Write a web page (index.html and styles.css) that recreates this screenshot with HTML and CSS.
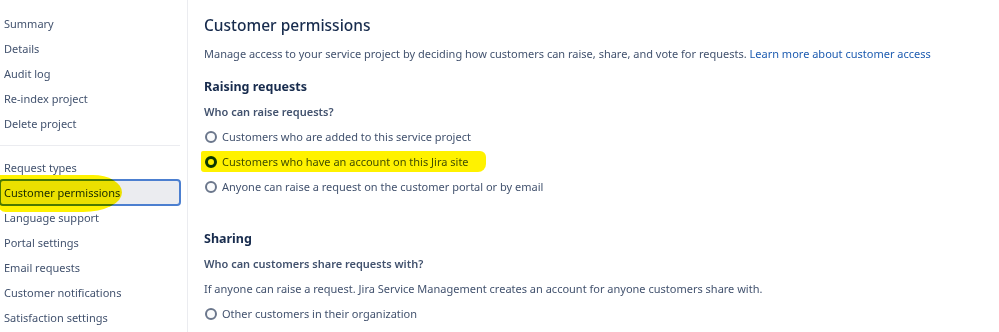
FILE: index.html
```html
<!DOCTYPE html>
<html>
<head>
<meta charset="utf-8">
<link rel="stylesheet" href="styles.css">
</head>
<body>
<div class="page">
  <nav class="sidebar">
    <div class="group">
      <div class="item">Summary</div>
      <div class="item">Details</div>
      <div class="item">Audit log</div>
      <div class="item">Re-index project</div>
      <div class="item">Delete project</div>
    </div>
    <div class="divider"></div>
    <div class="group">
      <div class="item">Request types</div>
      <div class="item selected">Customer permissions<span class="marker marker-side"></span></div>
      <div class="item">Language support</div>
      <div class="item">Portal settings</div>
      <div class="item">Email requests</div>
      <div class="item">Customer notifications</div>
      <div class="item">Satisfaction settings</div>
    </div>
  </nav>
  <main class="content">
    <h1 class="title">Customer permissions</h1>
    <p class="desc">Manage access to your service project by deciding how customers can raise, share, and vote for requests. <a class="link">Learn more about customer access</a></p>
    <h2 class="section">Raising requests</h2>
    <div class="label">Who can raise requests?</div>
    <label class="radio"><span class="dot"></span>Customers who are added to this service project</label>
    <label class="radio checked"><span class="dot"></span>Customers who have an account on this Jira site<span class="marker marker-main"></span></label>
    <label class="radio"><span class="dot"></span>Anyone can raise a request on the customer portal or by email</label>
    <h2 class="section sharing">Sharing</h2>
    <div class="label">Who can customers share requests with?</div>
    <p class="desc">If anyone can raise a request. Jira Service Management creates an account for anyone customers share with.</p>
    <label class="radio"><span class="dot"></span>Other customers in their organization</label>
  </main>
</div>
</body>
</html>
```

FILE: styles.css
```css
html, body {
  margin: 0;
  padding: 0;
  background: #ffffff;
}
body {
  font-family: "Noto Sans", "Open Sans", sans-serif;
  color: #172b4d;
  overflow: hidden;
}
.page {
  display: flex;
  height: 332px;
}
.sidebar {
  width: 188px;
  flex: none;
  border-right: 1px solid #ebecf0;
  padding-top: 11px;
  box-sizing: border-box;
}
.group {
  width: 180px;
}
.item {
  position: relative;
  height: 25px;
  line-height: 25px;
  padding-left: 4px;
  font-size: 11px;
  color: #42526e;
  white-space: nowrap;
}
.item.selected {
  background: #ebecf0;
  outline: 2px solid #4c7fd0;
  outline-offset: -1px;
  border-radius: 3px;
  color: #172b4d;
}
.divider {
  width: 180px;
  height: 1px;
  background: #ebecf0;
  margin: 9px 0 9px;
}
.marker {
  position: absolute;
  background: #fff200;
  mix-blend-mode: multiply;
  pointer-events: none;
}
.marker-side {
  left: -4px;
  top: -5px;
  width: 126px;
  height: 37px;
  border-radius: 4px 30px 40px 10px / 4px 18px 20px 14px;
}
.marker-main {
  left: -3px;
  top: 2px;
  width: 285px;
  height: 21px;
  border-radius: 2px 6px 8px 3px;
}
.content {
  flex: 1;
  padding: 11px 0 0 16px;
}
.title {
  margin: 0;
  font-size: 15.5px;
  font-weight: 500;
  line-height: 28px;
  color: #172b4d;
}
.desc {
  margin: 2px 0 0;
  height: 25px;
  line-height: 25px;
  font-size: 11px;
  color: #42526e;
  white-space: nowrap;
}
.link {
  color: #1c5bb0;
}
.section {
  margin: 8px 0 0;
  height: 25px;
  line-height: 25px;
  font-size: 12.5px;
  font-weight: 700;
  color: #172b4d;
}
.section.sharing {
  margin-top: 27px;
}
.label {
  height: 25px;
  line-height: 25px;
  font-size: 11px;
  font-weight: 600;
  color: #42526e;
}
.label + .desc {
  margin-top: 0;
}
.radio {
  position: relative;
  display: flex;
  align-items: center;
  height: 25px;
  font-size: 11px;
  color: #42526e;
  white-space: nowrap;
}
.dot {
  width: 8px;
  height: 8px;
  border: 2px solid #6b778c;
  border-radius: 50%;
  margin: 0 5px 0 1px;
  flex: none;
  background: #fafbfc;
}
.radio.checked .dot {
  border: 3px solid #0c3a1a;
  width: 6px;
  height: 6px;
  background: #ffffff;
}
```
